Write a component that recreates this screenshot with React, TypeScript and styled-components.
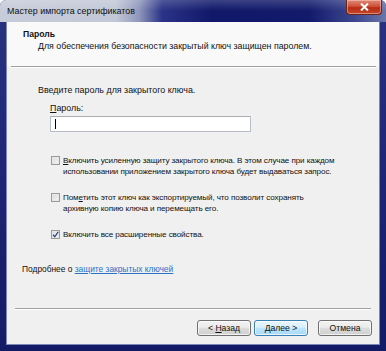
import React from 'react';
import styled, { createGlobalStyle } from 'styled-components';

const GlobalStyle = createGlobalStyle`
  html, body {
    margin: 0;
    padding: 0;
    background: #ffffff;
  }
  body {
    font-family: "Liberation Sans", "Noto Sans", sans-serif;
  }
`;

const Window = styled.div`
  width: 386px;
  height: 351px;
  display: flex;
  flex-direction: column;
  background: linear-gradient(180deg, #2a3382 0%, #1b2372 60%, #141b66 100%);
  border-radius: 6px 6px 0 0;
  overflow: hidden;
  box-sizing: border-box;
`;

const TitleBar = styled.div`
  height: 22px;
  flex: none;
  display: flex;
  align-items: flex-start;
  background:
    linear-gradient(180deg, rgba(255, 255, 255, 0.18) 0%, rgba(255, 255, 255, 0) 50%),
    linear-gradient(90deg, #c6ccd9 0%, #c2c8d7 30%, #8f97bb 36%, #2a3386 42%, #101869 55%, #121a6b 80%, #3d4890 92%, #6a75a8 100%);
`;

const Title = styled.div`
  padding: 5px 0 0 7px;
  font-size: 8.9px;
  line-height: 12px;
  color: #111111;
  white-space: nowrap;
`;

const CloseButton = styled.div`
  margin-left: auto;
  margin-right: 4px;
  width: 36px;
  height: 15px;
  display: flex;
  align-items: center;
  justify-content: center;
  background: linear-gradient(180deg, #e08a78 0%, #cf5238 45%, #b82c14 55%, #c4462a 100%);
  border: 1px solid #6b2418;
  border-top: none;
  border-radius: 0 0 4px 4px;
  box-sizing: border-box;
  box-shadow: inset 0 0 0 1px rgba(255, 220, 210, 0.45);
`;

const Frame = styled.div`
  flex: 1;
  display: flex;
  padding: 0 6px 6px 6px;
  min-height: 0;
`;

const Client = styled.div`
  flex: 1;
  display: flex;
  flex-direction: column;
  background: #f0f0f0;
  border: 1px solid #7d86b4;
  border-top: none;
  box-sizing: border-box;
  font-size: 8.9px;
  line-height: 11px;
  color: #111111;
  white-space: nowrap;
`;

const Header = styled.div`
  height: 44px;
  flex: none;
  background: #f9f9f9;
  padding: 7px 0 0 16px;
  box-sizing: border-box;
`;

const HeaderTitle = styled.div`
  font-weight: bold;
  font-size: 8.6px;
`;

const HeaderText = styled.div`
  margin-top: 1px;
  padding-left: 15px;
  font-size: 8.8px;
`;

const Separator = styled.div<{ $inset: number; $insetRight: number }>`
  flex: none;
  height: 0;
  margin: 0 ${(p) => p.$insetRight}px 0 ${(p) => p.$inset}px;
  border-top: 1px solid #a0a0a0;
  border-bottom: 1px solid #ffffff;
`;

const Body = styled.div`
  flex: 1;
  display: flex;
  flex-direction: column;
  padding: 17px 0 0 31px;
`;

const Prompt = styled.div`
  margin-bottom: 7px;
`;

const Field = styled.div`
  padding-left: 12px;
  display: flex;
  flex-direction: column;
`;

const Label = styled.div`
  margin-bottom: 2px;
`;

const Input = styled.div`
  width: 201px;
  height: 16px;
  background: #ffffff;
  border: 1px solid #b8bcc6;
  border-top-color: #abadb3;
  box-sizing: border-box;
  border-radius: 1px;
  display: flex;
  align-items: center;
  padding-left: 4px;
`;

const Caret = styled.div`
  width: 1px;
  height: 10px;
  background: #000000;
`;

const Options = styled.div`
  margin-top: 23px;
  padding-left: 13px;
  display: flex;
  flex-direction: column;
  gap: 15px;
`;

const Option = styled.div`
  display: flex;
  align-items: flex-start;
  gap: 3px;
`;

const Box = styled.div`
  flex: none;
  width: 9px;
  height: 9px;
  margin-top: 1px;
  border: 1px solid #9a9a9a;
  box-sizing: border-box;
  background: linear-gradient(135deg, #dcdcdc 0%, #f4f4f4 100%);
  box-shadow: inset 0 0 0 1px #e8e8e8;
  display: flex;
  align-items: center;
  justify-content: center;
`;

const OptionText = styled.div`
  font-size: 8.1px;
  letter-spacing: -0.1px;
`;

const More = styled.div`
  margin: 24px 0 0 -16px;
  font-size: 8.4px;
`;

const Link = styled.a`
  color: #2a72c8;
  text-decoration: underline;
`;

const Footer = styled.div`
  flex: none;
  display: flex;
  justify-content: flex-end;
  gap: 3px;
  padding: 10px 7px 8px 0;
`;

const Button = styled.div<{ $primary?: boolean; $spaced?: boolean }>`
  width: 54px;
  height: 16px;
  box-sizing: border-box;
  margin-left: ${(p) => (p.$spaced ? '7px' : '0')};
  border: 1px solid ${(p) => (p.$primary ? '#3c7fb1' : '#707070')};
  border-radius: 3px;
  background: ${(p) =>
    p.$primary
      ? 'linear-gradient(180deg, #eaf6fd 0%, #d9f0fc 45%, #bee6fd 50%, #a7d9f5 100%)'
      : 'linear-gradient(180deg, #f2f2f2 0%, #ebebeb 45%, #dddddd 50%, #cfcfcf 100%)'};
  box-shadow: inset 0 0 0 1px rgba(255, 255, 255, 0.7);
  display: flex;
  align-items: center;
  justify-content: center;
  font-size: 8.6px;
  color: #111111;
`;

const Key = styled.span`
  text-decoration: underline;
`;

const App = () => {
  return (
    <>
      <GlobalStyle />
      <Window>
        <TitleBar>
          <Title>Мастер импорта сертификатов</Title>
          <CloseButton>
            <svg width="9" height="8" viewBox="0 0 9 8">
              <path d="M1 0.5 L8 7.5 M8 0.5 L1 7.5" stroke="#ffffff" strokeWidth="2" />
            </svg>
          </CloseButton>
        </TitleBar>
        <Frame>
          <Client>
            <Header>
              <HeaderTitle>Пароль</HeaderTitle>
              <HeaderText>Для обеспечения безопасности закрытый ключ защищен паролем.</HeaderText>
            </Header>
            <Separator $inset={4} $insetRight={3} />
            <Body>
              <Prompt>Введите пароль для закрытого ключа.</Prompt>
              <Field>
                <Label>
                  <Key>П</Key>ароль:
                </Label>
                <Input>
                  <Caret />
                </Input>
              </Field>
              <Options>
                <Option>
                  <Box />
                  <OptionText>
                    <Key>В</Key>ключить усиленную защиту закрытого ключа. В этом случае при каждом
                    <br />
                    использовании приложением закрытого ключа будет выдаваться запрос.
                  </OptionText>
                </Option>
                <Option>
                  <Box />
                  <OptionText>
                    Пом<Key>е</Key>тить этот ключ как экспортируемый, что позволит сохранять
                    <br />
                    архивную копию ключа и перемещать его.
                  </OptionText>
                </Option>
                <Option>
                  <Box>
                    <svg width="7" height="7" viewBox="0 0 7 7">
                      <path d="M1 3.8 L2.8 5.8 L6.2 0.8" fill="none" stroke="#2b4a86" strokeWidth="1.3" />
                    </svg>
                  </Box>
                  <OptionText>Включить все расширенные свойства.</OptionText>
                </Option>
              </Options>
              <More>
                Подробнее о <Link>защите закрытых ключей</Link>
              </More>
            </Body>
            <Separator $inset={8} $insetRight={8} />
            <Footer>
              <Button>
                <span>
                  &lt; <Key>Н</Key>азад
                </span>
              </Button>
              <Button $primary>
                <span>
                  <Key>Д</Key>алее &gt;
                </span>
              </Button>
              <Button $spaced>Отмена</Button>
            </Footer>
          </Client>
        </Frame>
      </Window>
    </>
  );
};

export default App;
